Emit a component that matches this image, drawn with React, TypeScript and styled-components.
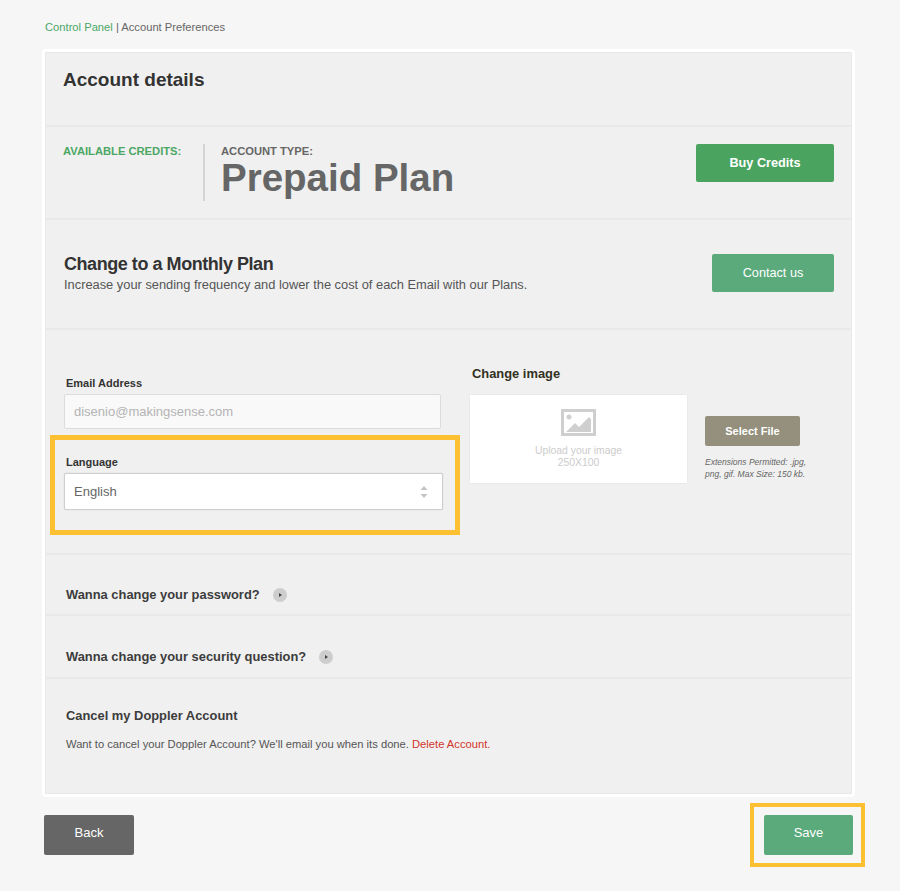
import React from 'react'
import styled, { createGlobalStyle } from 'styled-components'

const GlobalStyle = createGlobalStyle`
    html, body {
        margin: 0;
        padding: 0;
        background: #f6f6f6;
        font-family: 'Liberation Sans', Arial, sans-serif;
    }
`

const Page = styled.div`
    width: 900px;
    height: 891px;
    padding: 20px 45px 0 42px;
    box-sizing: border-box;
    overflow: hidden;
`

const Breadcrumb = styled.div`
    font-size: 11.2px;
    line-height: 14px;
    color: #666;
    margin: 0 0 15px 3px;
    a {
        color: #4ca766;
        text-decoration: none;
    }
`

const Card = styled.div`
    width: 813px;
    box-sizing: border-box;
    border: 3px solid #fff;
    border-radius: 4px;
    background: #f0f0f0;
    box-shadow: inset 0 0 0 1px #e8e8e8;
`

const Section = styled.section<{ $height: number }>`
    height: ${(p) => p.$height}px;
    box-sizing: border-box;
    border-bottom: 2px solid #e9e9e9;
    position: relative;
    &:last-child {
        border-bottom: 0;
    }
`

const HeaderSection = styled(Section)`
    padding: 16px 18px;
`

const Title = styled.h1`
    margin: 0;
    font-size: 19px;
    line-height: 24px;
    font-weight: 700;
    color: #333;
`

const CreditsSection = styled(Section)`
    display: flex;
    align-items: flex-start;
    padding: 17px 18px 0 18px;
`

const CreditsLabel = styled.div`
    width: 140px;
    font-size: 11.2px;
    line-height: 14px;
    font-weight: 700;
    color: #4ca766;
`

const TypeBlock = styled.div`
    border-left: 2px solid #d4d4d4;
    height: 57px;
    padding-left: 16px;
    flex: 1;
`

const TypeLabel = styled.div`
    font-size: 11.2px;
    line-height: 14px;
    font-weight: 700;
    color: #666;
`

const PlanName = styled.div`
    font-size: 38.5px;
    line-height: 40px;
    font-weight: 700;
    color: #666;
`

const Button = styled.button<{ $bg: string; $w: number; $h: number }>`
    width: ${(p) => p.$w}px;
    height: ${(p) => p.$h}px;
    background: ${(p) => p.$bg};
    border: 0;
    border-radius: 2px;
    padding: 0;
    color: #fff;
    font-family: inherit;
    font-size: 12.7px;
    flex: none;
`

const BoldButton = styled(Button)`
    font-weight: 700;
`

const ContactButton = styled(Button)`
    margin-top: 1px;
`

const SelectFileButton = styled(BoldButton)`
    font-size: 11px;
`

const MonthlySection = styled(Section)`
    display: flex;
    justify-content: space-between;
    align-items: flex-start;
    padding: 33px 18px 0 19px;
`

const PlanHeading = styled.h2`
    margin: 0 0 2px;
    font-size: 18px;
    line-height: 22px;
    font-weight: 700;
    letter-spacing: -0.45px;
    color: #333;
`

const PlanText = styled.p`
    margin: 0;
    font-size: 12.85px;
    line-height: 15px;
    color: #555;
`

const FormSection = styled(Section)`
    display: flex;
    padding: 0 0 0 5px;
`

const FormColumn = styled.div`
    width: 410px;
    flex: none;
    padding-top: 46px;
`

const Field = styled.div`
    padding: 0 16px 0 14px;
`

const Label = styled.label`
    display: block;
    font-size: 11px;
    line-height: 14px;
    font-weight: 700;
    color: #333;
    margin: 0 0 4px 2px;
`

const EmailInput = styled.div`
    width: 377px;
    height: 35px;
    box-sizing: border-box;
    background: #f9f9f9;
    border: 1px solid #dcdcdc;
    border-radius: 2px;
    padding-left: 9px;
    font-size: 13px;
    line-height: 33px;
    color: #b4b4b4;
`

const Highlight = styled.div`
    margin-top: 6px;
    height: 100px;
    box-sizing: border-box;
    border: 5px solid #fdc032;
    padding-top: 15px;
`

const LanguageField = styled(Field)`
    padding: 0 0 0 9px;
`

const Select = styled.div`
    width: 379px;
    height: 37px;
    box-sizing: border-box;
    background: #fff;
    border: 1px solid #cfcfcf;
    border-radius: 2px;
    box-shadow: 0 0 1px #bbb;
    padding: 0 14px 0 9px;
    display: flex;
    align-items: center;
    justify-content: space-between;
    font-size: 13px;
    color: #666;
`

const ImageColumn = styled.div`
    padding: 36px 0 0 10px;
`

const ImageHeading = styled.h3`
    margin: 0 0 13px 2px;
    font-size: 12.9px;
    line-height: 16px;
    font-weight: 700;
    color: #33301f;
`

const ImageRow = styled.div`
    display: flex;
    align-items: flex-start;
`

const Upload = styled.div`
    width: 217px;
    height: 88px;
    background: #fff;
    box-shadow: 0 0 2px #ddd;
    display: flex;
    flex-direction: column;
    align-items: center;
    padding-top: 14px;
    box-sizing: border-box;
    font-size: 10.4px;
    line-height: 12px;
    color: #ccc;
    text-align: center;
    svg {
        margin-bottom: 9px;
    }
`

const FileColumn = styled.div`
    margin: 21px 0 0 18px;
    width: 110px;
`

const Hint = styled.p`
    margin: 10px 0 0;
    font-size: 8.5px;
    line-height: 12px;
    font-style: italic;
    color: #666;
`

const ToggleSection = styled(Section)`
    display: flex;
    align-items: center;
    padding: 20px 0 0 21px;
`

const ToggleText = styled.span`
    font-size: 12.9px;
    font-weight: 700;
    color: #3c3c3c;
    margin-right: 13px;
`

const Arrow = styled.span`
    width: 14px;
    height: 14px;
    border-radius: 50%;
    background: #cdcdcd;
    display: flex;
    align-items: center;
    justify-content: center;
    &::after {
        content: '';
        margin-left: 1px;
        border-left: 3px solid #444;
        border-top: 2.5px solid transparent;
        border-bottom: 2.5px solid transparent;
    }
`

const CancelSection = styled(Section)`
    padding: 29px 0 0 21px;
`

const CancelHeading = styled.h3`
    margin: 0 0 13px;
    font-size: 12.9px;
    line-height: 16px;
    font-weight: 700;
    color: #3c3c3c;
`

const CancelText = styled.p`
    margin: 0;
    font-size: 11.2px;
    line-height: 14px;
    color: #555;
    a {
        color: #d0342c;
        text-decoration: none;
    }
`

const Footer = styled.div`
    display: flex;
    justify-content: space-between;
    align-items: flex-start;
    width: 823px;
    margin: 6px 0 0 0;
    padding-left: 2px;
    box-sizing: border-box;
`

const BackButton = styled(Button)`
    margin-top: 12px;
    padding-bottom: 5px;
    font-size: 13px;
`

const SaveHighlight = styled.div`
    width: 115px;
    height: 64px;
    box-sizing: border-box;
    border: 4px solid #fdc032;
    padding: 8px 0 0 10px;
`

const SaveButton = styled(Button)`
    padding-bottom: 5px;
    font-size: 13px;
`

const ImageIcon = () => (
    <svg width="35" height="27" viewBox="0 0 35 27">
        <path fill="#cfcfcf" fillRule="evenodd" d="M0 0h35v27H0zM3 3v21h29V3z" />
        <circle cx="8" cy="8" r="2.5" fill="#cfcfcf" />
        <path fill="#cfcfcf" d="M5 23l9-9 4 4 10-10 2 2v13z" />
    </svg>
)

const SelectArrows = () => (
    <svg width="8" height="12" viewBox="0 0 8 12">
        <path fill="#c4c4c0" d="M4 0l3.5 4h-7zM4 12L.5 8h7z" />
    </svg>
)

export default function App() {
    return (
        <Page>
            <GlobalStyle />
            <Breadcrumb>
                <a href="#">Control Panel</a> | Account Preferences
            </Breadcrumb>
            <Card>
                <HeaderSection $height={75}>
                    <Title>Account details</Title>
                </HeaderSection>
                <CreditsSection $height={93}>
                    <CreditsLabel>AVAILABLE CREDITS:</CreditsLabel>
                    <TypeBlock>
                        <TypeLabel>ACCOUNT TYPE:</TypeLabel>
                        <PlanName>Prepaid Plan</PlanName>
                    </TypeBlock>
                    <BoldButton $bg="#4aa35f" $w={138} $h={38}>
                        Buy Credits
                    </BoldButton>
                </CreditsSection>
                <MonthlySection $height={110}>
                    <div>
                        <PlanHeading>Change to a Monthly Plan</PlanHeading>
                        <PlanText>Increase your sending frequency and lower the cost of each Email with our Plans.</PlanText>
                    </div>
                    <ContactButton $bg="#5aaa7b" $w={122} $h={38}>
                        Contact us
                    </ContactButton>
                </MonthlySection>
                <FormSection $height={225}>
                    <FormColumn>
                        <Field>
                            <Label>Email Address</Label>
                            <EmailInput>disenio@makingsense.com</EmailInput>
                        </Field>
                        <Highlight>
                            <LanguageField>
                                <Label>Language</Label>
                                <Select>
                                    English
                                    <SelectArrows />
                                </Select>
                            </LanguageField>
                        </Highlight>
                    </FormColumn>
                    <ImageColumn>
                        <ImageHeading>Change image</ImageHeading>
                        <ImageRow>
                            <Upload>
                                <ImageIcon />
                                Upload your image
                                <br />
                                250X100
                            </Upload>
                            <FileColumn>
                                <SelectFileButton $bg="#94907d" $w={95} $h={30}>
                                    Select File
                                </SelectFileButton>
                                <Hint>Extensions Permitted: .jpg, png, gif. Max Size: 150 kb.</Hint>
                            </FileColumn>
                        </ImageRow>
                    </ImageColumn>
                </FormSection>
                <ToggleSection $height={61}>
                    <ToggleText>Wanna change your password?</ToggleText>
                    <Arrow />
                </ToggleSection>
                <ToggleSection $height={63}>
                    <ToggleText>Wanna change your security question?</ToggleText>
                    <Arrow />
                </ToggleSection>
                <CancelSection $height={115}>
                    <CancelHeading>Cancel my Doppler Account</CancelHeading>
                    <CancelText>
                        Want to cancel your Doppler Account? We'll email you when its done. <a href="#">Delete Account.</a>
                    </CancelText>
                </CancelSection>
            </Card>
            <Footer>
                <BackButton $bg="#666" $w={90} $h={40}>
                    Back
                </BackButton>
                <SaveHighlight>
                    <SaveButton $bg="#5aaa7b" $w={89} $h={40}>
                        Save
                    </SaveButton>
                </SaveHighlight>
            </Footer>
        </Page>
    )
}
